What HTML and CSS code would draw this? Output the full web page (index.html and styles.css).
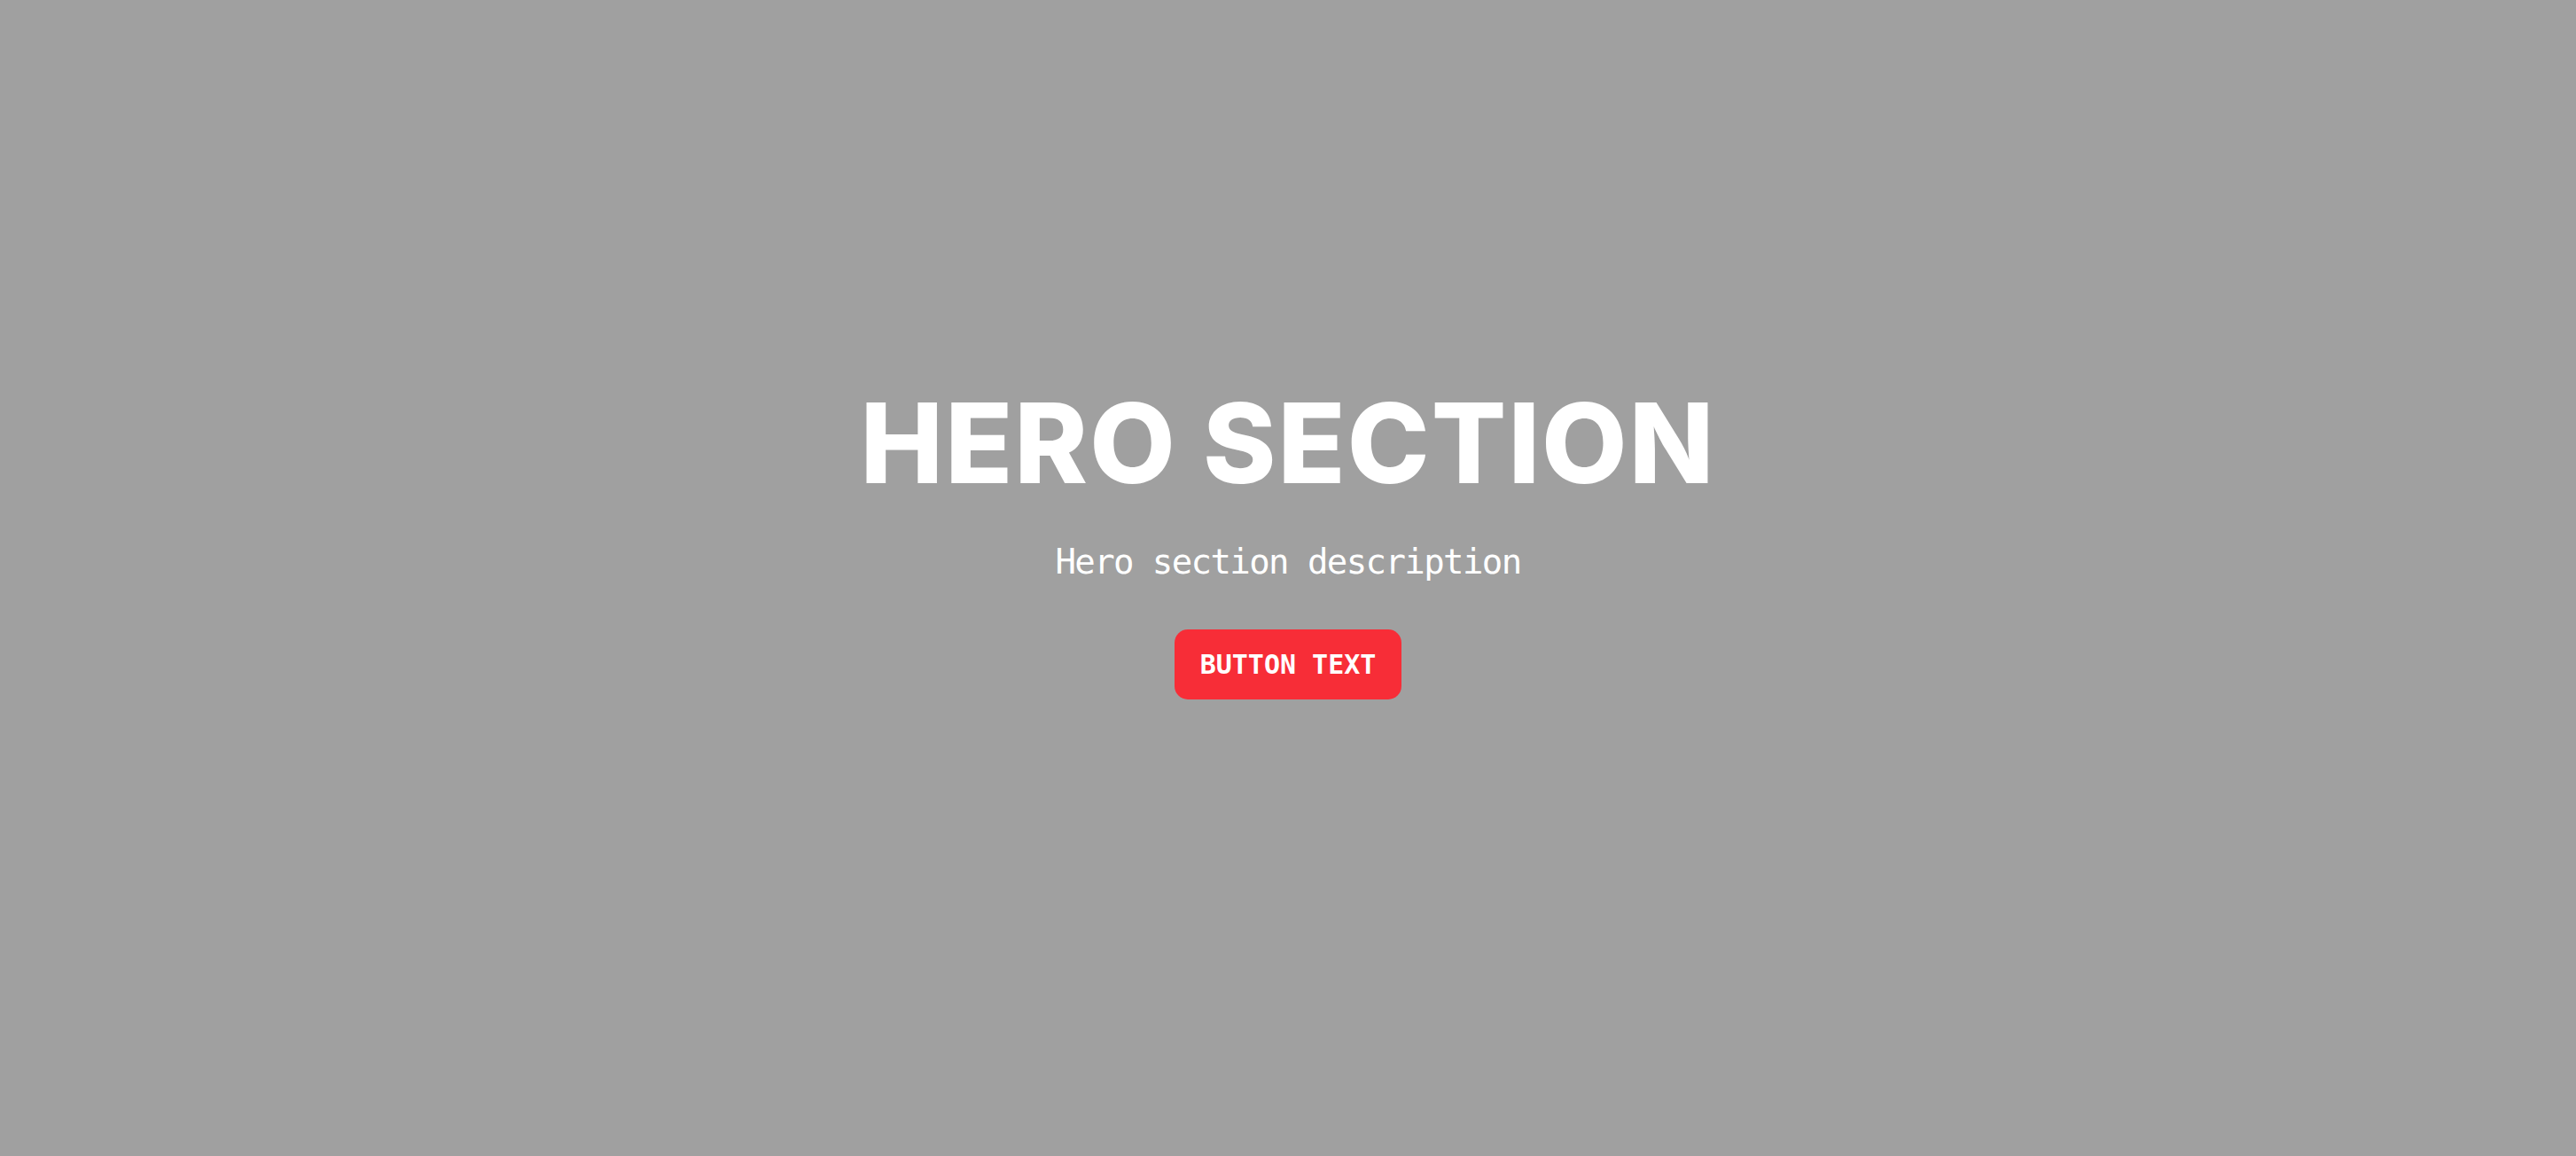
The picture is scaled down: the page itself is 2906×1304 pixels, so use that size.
FILE: index.html
```html
<!DOCTYPE html>
<html lang="en">
<head>
<meta charset="utf-8">
<title>Hero Section</title>
<link rel="stylesheet" href="styles.css">
</head>
<body>
<section class="hero">
  <h1 class="hero-title">HERO SECTION</h1>
  <p class="hero-desc">Hero section description</p>
  <a class="hero-btn" href="#">BUTTON TEXT</a>
</section>
</body>
</html>
```
FILE: styles.css
```css
html, body {
  margin: 0;
  padding: 0;
}
body {
  background: #a0a0a0;
  width: 2906px;
  height: 1304px;
  overflow: hidden;
}
.hero {
  display: flex;
  flex-direction: column;
  align-items: center;
  padding-top: 437px;
}
.hero-title {
  margin: 0;
  font-family: "Inter", "Liberation Sans", sans-serif;
  font-weight: 800;
  font-size: 125px;
  line-height: 1;
  color: #ffffff;
  letter-spacing: 2px;
}
.hero-desc {
  margin: 48px 0 0;
  font-family: "DejaVu Sans Mono", "Liberation Mono", monospace;
  font-size: 39px;
  line-height: 48px;
  letter-spacing: -1.6px;
  color: #ffffff;
}
.hero-btn {
  margin-top: 52px;
  display: inline-flex;
  align-items: center;
  justify-content: center;
  width: 256px;
  height: 79px;
  box-sizing: border-box;
  background: #f72d37;
  border-radius: 15px;
  color: #ffffff;
  text-decoration: none;
  font-family: "DejaVu Sans Mono", "Liberation Mono", monospace;
  font-weight: bold;
  font-size: 30px;
}
```
